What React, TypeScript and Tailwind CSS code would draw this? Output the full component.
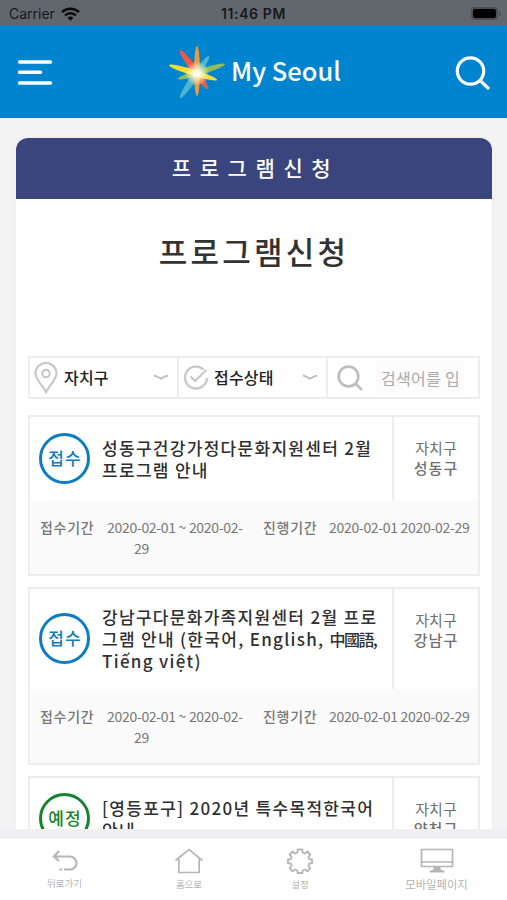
import type { ReactNode } from "react";

type Program = {
    id: number;
    status: string;
    upcoming?: boolean;
    lines: ReactNode[];
    district: string;
    headHeight: string;
    badgeTop: string;
    titleTop: string;
};

const programs: Program[] = [
    {
        id: 1,
        status: "접수",
        lines: ["성동구건강가정다문화지원센터 2월", "프로그램 안내"],
        district: "성동구",
        headHeight: "h-[83px]",
        badgeTop: "mt-[16px]",
        titleTop: "pt-[20px]",
    },
    {
        id: 2,
        status: "접수",
        lines: [
            "강남구다문화가족지원센터 2월 프로",
            <>
                그램 안내 (한국어, English, <span className="text-[16px] tracking-[-1.6px]">中國語</span>,
            </>,
            "Tiếng việt)",
        ],
        district: "강남구",
        headHeight: "h-[100px]",
        badgeTop: "mt-[24px]",
        titleTop: "pt-[17px]",
    },
    {
        id: 3,
        status: "예정",
        upcoming: true,
        lines: ["[영등포구] 2020년 특수목적한국어", "안내"],
        district: "양천구",
        headHeight: "h-[83px]",
        badgeTop: "mt-[15px]",
        titleTop: "pt-[19px]",
    },
];

function StatusBar() {
    return (
        <div className="grid h-[25px] shrink-0 grid-cols-3 items-center bg-[#62676e] pt-[2px] font-['Inter',sans-serif] text-[14px] text-[#15181b]">
            <div className="flex items-center gap-[6px] pl-[9px]">
                <span>Carrier</span>
                <svg width="19" height="14" viewBox="0 0 19 14" fill="none" stroke="#08090a" strokeWidth="2.5">
                    <path d="M1 5.2a12.3 12.3 0 0 1 17 0M4 8.4a8 8 0 0 1 11 0" />
                    <path d="M6.6 10.8a4.2 4.2 0 0 1 5.8 0L9.5 13.8z" fill="#08090a" stroke="none" />
                </svg>
            </div>
            <span className="text-center text-[14px] font-semibold tracking-[0.6px]">11:46 PM</span>
            <div className="flex items-center justify-end pr-[6px]">
                <div className="rounded-[4px] border-2 border-[#4b4f54]">
                    <div className="h-[9px] w-[23px] rounded-[2px] bg-black" />
                </div>
                <div className="ml-px h-[5px] w-[2px] rounded-r-full bg-[#4b4f54]" />
            </div>
        </div>
    );
}

function Logo() {
    return (
        <svg width="62" height="60" viewBox="0 0 62 60">
            <defs>
                <radialGradient id="glow">
                    <stop offset="0" stopColor="#fff" />
                    <stop offset=".3" stopColor="#fffef2" stopOpacity=".85" />
                    <stop offset="1" stopColor="#fff3b0" stopOpacity="0" />
                </radialGradient>
            </defs>
            <ellipse cx="28.5" cy="35" rx="25.5" ry="3.4" fill="#4fb3cc" transform="rotate(-55.4 28.5 35)" />
            <ellipse cx="35.5" cy="29.5" rx="24.6" ry="3" fill="#8dbd5c" transform="rotate(-17.7 35.5 29.5)" />
            <ellipse cx="28" cy="27.5" rx="24" ry="3.4" fill="#ee5a43" transform="rotate(54.3 28 27.5)" />
            <ellipse cx="31" cy="29" rx="2.9" ry="25" fill="#f29a38" />
            <ellipse cx="27" cy="30.5" rx="25.2" ry="3" fill="#f7dc2e" transform="rotate(17.4 27 30.5)" />
            <circle cx="31" cy="31.5" r="12.5" fill="url(#glow)" />
        </svg>
    );
}

function Header() {
    return (
        <header className="flex h-[93px] shrink-0 items-center justify-between bg-[#0084d0] px-[17px]">
            <svg width="36" height="28" viewBox="0 0 36 28" stroke="#fff" strokeWidth="3.5" strokeLinecap="round">
                <path d="M2.5 4h31M2.5 14.3h21M2.5 25h31" />
            </svg>
            <div className="flex items-center gap-[3px]">
                <Logo />
                <span className="mt-[-3px] w-[110px] whitespace-nowrap font-['Noto_Sans_CJK_KR',sans-serif] text-[25.5px] leading-[36px] font-medium text-white">
                    My Seoul
                </span>
            </div>
            <svg width="36" height="36" viewBox="0 0 36 36" fill="none" stroke="#fff" strokeWidth="3.2" strokeLinecap="round">
                <circle cx="16.5" cy="17" r="13.2" />
                <path d="M26 26.5 34 34" />
            </svg>
        </header>
    );
}

function Chevron() {
    return (
        <svg width="16" height="7" viewBox="0 0 16 7" fill="none" stroke="#bdbdbd" strokeWidth="1.8">
            <path d="M1 1.5Q4 2 8 4.8Q12 2 15 1.5" />
        </svg>
    );
}

function Filters() {
    return (
        <div className="grid h-[43px] grid-cols-[149px_149px_1fr] border-2 border-[#ededed] text-[16px] font-medium text-[#222]">
            <div className="flex items-center border-r-2 border-[#ededed] pr-[8px] pl-[4px]">
                <svg width="24" height="32" viewBox="0 0 24 32" fill="none" stroke="#c8c8c8" strokeWidth="2.2">
                    <path d="M12 30C9 24 1.5 17 1.5 11.5a10.5 10.5 0 0 1 21 0C22.5 17 15 24 12 30z" />
                    <circle cx="12" cy="11.5" r="3.7" />
                </svg>
                <span className="mt-[-2px] ml-[6px] flex-1 tracking-[0.2px]">자치구</span>
                <Chevron />
            </div>
            <div className="flex items-center border-r-2 border-[#ededed] pr-[8px] pl-[4px]">
                <svg width="27" height="26" viewBox="0 0 27 26" fill="none" stroke="#c8c8c8" strokeWidth="2.3">
                    <path d="M20.5 4.5A11 11 0 1 0 24 13" />
                    <path d="M7.5 11.5 12 16 23.5 5" />
                </svg>
                <span className="mt-[-2px] ml-[4px] flex-1 tracking-[0.2px]">접수상태</span>
                <Chevron />
            </div>
            <div className="flex items-center pl-[9px]">
                <svg width="26" height="26" viewBox="0 0 26 26" fill="none" stroke="#bebebe" strokeWidth="2.7">
                    <circle cx="11.5" cy="11.5" r="9.8" />
                    <path d="M18.5 18.5 25 25" />
                </svg>
                <div className="ml-[13px] flex h-[35px] w-[88px] items-center whitespace-nowrap bg-[#fcfcfc] pl-[5px] font-normal tracking-[0.3px] text-[#aaa]">
                    검색어를 입
                </div>
            </div>
        </div>
    );
}

function ProgramCard({ program }: { program: Program }) {
    const color = program.upcoming ? "border-[#16842f] text-[#16842f]" : "border-[#0b7dc3] text-[#0b7dc3]";

    return (
        <li className="border-2 border-[#ededed]">
            <div className={`flex ${program.headHeight}`}>
                <div
                    className={`ml-[9px] flex h-[51px] w-[51px] shrink-0 items-center justify-center rounded-full border-[3.5px] text-[17px] font-medium tracking-[1px] ${program.badgeTop} ${color}`}
                >
                    <span className="mt-[-2px] pl-px">{program.status}</span>
                </div>
                <div
                    className={`ml-[12px] flex-1 whitespace-nowrap text-[17px] leading-[22px] font-medium tracking-[1.3px] text-[#303030] ${program.titleTop}`}
                >
                    {program.lines.map((line, i) => (
                        <div key={i} className="h-[22px]">
                            {line}
                        </div>
                    ))}
                </div>
                <div className="flex w-[86px] shrink-0 flex-col items-center border-l-2 border-[#ededed] pt-[21px] text-[15px] leading-[20px] text-[#707070]">
                    <span>자치구</span>
                    <span className="font-medium tracking-[1px]">{program.district}</span>
                </div>
            </div>
            <div className="flex h-[74px] whitespace-nowrap bg-[#fafafa] pt-[17px] pl-[10px] text-[14px] leading-[21px] tracking-[-0.31px] text-[#777]">
                <span className="w-[67px] font-medium tracking-[0.7px]">접수기간</span>
                <div className="w-[156px]">
                    <div>2020-02-01 ~ 2020-02-</div>
                    <div className="w-[69px] text-center">29</div>
                </div>
                <span className="w-[66px] font-medium tracking-[0.7px]">진행기간</span>
                <span>2020-02-01 2020-02-29</span>
            </div>
        </li>
    );
}

function BottomNav() {
    return (
        <nav className="flex h-[71px] shrink-0 border-t-[10px] border-[#f0f0f3] bg-white text-[#b3b3b3]">
            <div className="flex w-[129px] flex-col items-center pt-[11px]">
                <svg width="26" height="22" viewBox="0 0 26 22" fill="none" stroke="#b5b5b5" strokeWidth="2.2">
                    <path d="M7 1 2 6.5 7 11M2 6.5H18a6.5 6.5 0 0 1 0 13H12M7.5 19.5h2.5" />
                </svg>
                <span className="mt-[5px] text-[9.5px] leading-[12px]">뒤로가기</span>
            </div>
            <div className="flex w-[120px] flex-col items-center pt-[9px]">
                <svg width="30" height="26" viewBox="0 0 30 26" fill="none" stroke="#b5b5b5" strokeWidth="1.7">
                    <path d="M1.5 12.5 15 1.5 28.5 12.5M4.8 10v14.5h20.4V10" />
                </svg>
                <span className="mt-[4px] text-[9.5px] leading-[12px]">홈으로</span>
            </div>
            <div className="flex w-[102px] flex-col items-center pt-[9px]">
                <svg width="26" height="26" viewBox="0 0 26 26" fill="none" stroke="#b5b5b5" strokeWidth="1.8" strokeLinejoin="round">
                    <path d="M10.5 1.5h5v3l2.5 1 2.3-2 3 3-1.9 2.5 1 2.3h2.6v4h-2.6l-1 2.7 1.9 2.3-3 3-2.3-1.8-2.5 1v2.5h-5v-2.5l-2.5-1-2.3 1.8-3-3 1.9-2.3-1-2.7H1v-4h2.6l1-2.3L2.7 6.5l3-3 2.3 2 2.5-1z" />
                </svg>
                <span className="mt-[4px] text-[9.5px] leading-[12px]">설정</span>
            </div>
            <div className="ml-[15px] flex flex-1 flex-col items-center pt-[9px]">
                <svg width="34" height="26" viewBox="0 0 34 26" fill="none" stroke="#b5b5b5" strokeWidth="1.7">
                    <path d="M1.5 1.5h31v17h-31zM1.5 14h31" />
                    <path d="M13.5 18.5h7v3l4 1.5v1.5h-15v-1.5l4-1.5z" fill="#b5b5b5" stroke="none" />
                </svg>
                <span className="mt-[4px] text-[11.3px] leading-[12px]">모바일페이지</span>
            </div>
        </nav>
    );
}

export default function App() {
    return (
        <div className="flex h-[900px] w-[507px] flex-col overflow-hidden bg-[#f3f3f3] font-['Noto_Sans_CJK_KR',sans-serif]">
            <StatusBar />
            <Header />
            <main className="min-h-0 flex-1 overflow-hidden pt-[20px] pr-[15px] pl-[16px]">
                <div className="rounded-t-[12px] bg-white shadow-[0_0_7px_rgba(0,0,0,0.03)]">
                    <div className="flex h-[61px] items-center justify-center rounded-t-[12px] bg-[#3a447d] pb-[2px] pl-[3px] text-[21px] font-medium tracking-[8.6px] text-white">
                        프로그램신청
                    </div>
                    <h1 className="h-[157px] pt-[28px] text-center text-[31px] leading-[48px] font-medium tracking-[3.2px] text-[#333]">
                        프로그램신청
                    </h1>
                    <div className="px-[12px]">
                        <Filters />
                        <ul className="mt-[16px] space-y-[11px]">
                            {programs.map((p) => (
                                <ProgramCard key={p.id} program={p} />
                            ))}
                        </ul>
                    </div>
                </div>
            </main>
            <BottomNav />
        </div>
    );
}
